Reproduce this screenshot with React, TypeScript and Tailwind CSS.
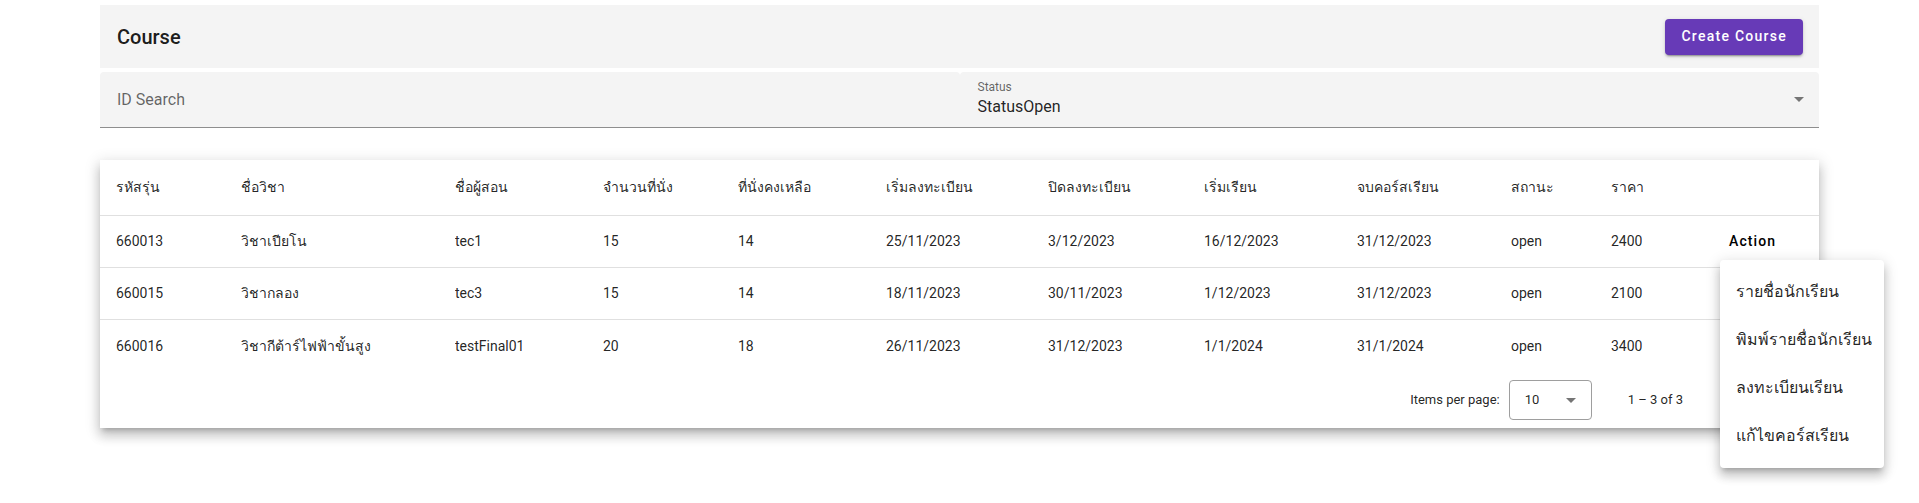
import React from "react";

const rows = [
  ["660013", "วิชาเปียโน", "tec1", "15", "14", "25/11/2023", "3/12/2023", "16/12/2023", "31/12/2023", "open", "2400"],
  ["660015", "วิชากลอง", "tec3", "15", "14", "18/11/2023", "30/11/2023", "1/12/2023", "31/12/2023", "open", "2100"],
  ["660016", "วิชากีต้าร์ไฟฟ้าขั้นสูง", "testFinal01", "20", "18", "26/11/2023", "31/12/2023", "1/1/2024", "31/1/2024", "open", "3400"],
];

const headers = [
  "รหัสรุ่น",
  "ชื่อวิชา",
  "ชื่อผู้สอน",
  "จำนวนที่นั่ง",
  "ที่นั่งคงเหลือ",
  "เริ่มลงทะเบียน",
  "ปิดลงทะเบียน",
  "เริ่มเรียน",
  "จบคอร์สเรียน",
  "สถานะ",
  "ราคา",
];

const gridCols =
  "grid grid-cols-[125px_214px_148px_135px_148px_162px_156px_153px_154px_100px_102px_1fr] items-center pl-[16px]";

export default function App() {
  return (
    <div
      className="relative min-h-[503px] bg-white text-[#000000de]"
      style={{ fontFamily: "Roboto, 'Noto Sans', sans-serif" }}
    >
      <div className="px-[100px] pt-[5px]">
        {/* Header */}
        <div className="flex h-[63px] items-center justify-between bg-[#f4f4f4] pl-[17px] pr-[16px]">
          <div className="text-[20px] font-medium text-[#000000e6]">Course</div>
          <button className="h-[36px] rounded-[4px] bg-[#673ab7] px-[16px] text-[14px] font-medium tracking-[0.09em] text-white shadow-[0_3px_1px_-2px_rgba(0,0,0,0.2),0_2px_2px_0_rgba(0,0,0,0.14),0_1px_5px_0_rgba(0,0,0,0.12)]">
            Create Course
          </button>
        </div>

        {/* Filters */}
        <div className="mt-[4px] grid grid-cols-2">
          <div className="flex h-[56px] items-center rounded-t-[4px] border-b border-[#8e8e8e] bg-[#f4f4f4] pl-[17px]">
            <span className="text-[16px] text-[#00000099]">ID Search</span>
          </div>
          <div className="relative flex h-[56px] flex-col rounded-t-[4px] border-b border-[#8e8e8e] bg-[#f4f4f4] pl-[18px] pr-[16px]">
            <span className="mt-[8px] text-[12px] leading-[14px] text-[#00000099]">Status</span>
            <span className="mt-[3px] text-[16px] leading-[20px]">StatusOpen</span>
            <svg
              className="absolute right-[15px] top-[25px]"
              width="10"
              height="5"
              viewBox="0 0 10 5"
            >
              <path d="M0 0 L5 5 L10 0 Z" fill="#757575" />
            </svg>
          </div>
        </div>

        {/* Table card */}
        <div className="mt-[32px] bg-white shadow-[0_5px_5px_-3px_rgba(0,0,0,0.2),0_8px_10px_1px_rgba(0,0,0,0.14),0_3px_14px_2px_rgba(0,0,0,0.12)]">
          <div className={`${gridCols} h-[56px] border-b border-[#e0e0e0] text-[14px]`}>
            {headers.map((h) => (
              <div key={h} className="truncate">{h}</div>
            ))}
            <div />
          </div>
          {rows.map((r, i) => (
            <div
              key={r[0]}
              className={`${gridCols} h-[52px] text-[14px] ${i < rows.length - 1 ? "border-b border-[#e0e0e0]" : ""}`}
            >
              {r.map((c, j) => (
                <div key={j} className="truncate">{c}</div>
              ))}
              <div>
                {i === 0 && (
                  <button className="px-[16px] text-[14px] font-medium tracking-[0.08em] text-black">
                    Action
                  </button>
                )}
              </div>
            </div>
          ))}
          {/* Paginator */}
          <div className="flex h-[56px] items-center justify-end pr-[136px] text-[13px]">
            <span className="mr-[9px] text-[#000000de]">Items per page:</span>
            <div className="flex h-[40px] w-[83px] items-center justify-between rounded-[4px] border border-[#9e9e9e] pl-[15px] pr-[15px]">
              <span className="text-[13px]">10</span>
              <svg width="10" height="5" viewBox="0 0 10 5">
                <path d="M0 0 L5 5 L10 0 Z" fill="#757575" />
              </svg>
            </div>
            <span className="ml-[36px]">1 – 3 of 3</span>
          </div>
        </div>
      </div>

      {/* Menu overlay */}
      <div className="absolute left-[1720px] top-[260px] w-[164px] rounded-[4px] bg-white py-[8px] shadow-[0_5px_5px_-3px_rgba(0,0,0,0.2),0_8px_10px_1px_rgba(0,0,0,0.14),0_3px_14px_2px_rgba(0,0,0,0.12)]">
        {["รายชื่อนักเรียน", "พิมพ์รายชื่อนักเรียน", "ลงทะเบียนเรียน", "แก้ไขคอร์สเรียน"].map((t) => (
          <div key={t} className="flex h-[48px] items-center whitespace-nowrap pl-[16px] text-[16px] text-[#000000de]">
            {t}
          </div>
        ))}
      </div>
    </div>
  );
}
